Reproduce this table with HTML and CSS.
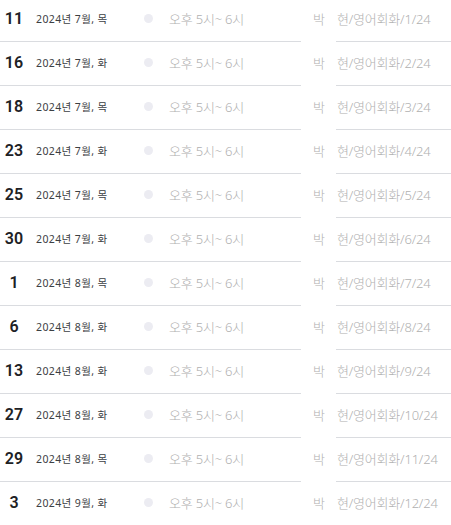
FILE: index.html
```html
<!DOCTYPE html>
<html lang="ko">
<head>
    <meta charset="UTF-8">
    <meta name="viewport" content="width=device-width, initial-scale=1.0">
    <title>수업 일정</title>
    <link rel="stylesheet" href="styles.css">
</head>
<body>
    <div class="schedule">
        <div class="row">
            <div class="line">
                <span class="day">11</span>
                <span class="date">2024년 7월, 목</span>
                <span class="dot"></span>
                <span class="time">오후 5시~ 6시</span>
                <span class="who">박</span>
                <span class="title">현/영어회화/1/24</span>
            </div>
            <div class="rule"><span class="seg-l"></span><span class="seg-r"></span></div>
        </div>
        <div class="row">
            <div class="line">
                <span class="day">16</span>
                <span class="date">2024년 7월, 화</span>
                <span class="dot"></span>
                <span class="time">오후 5시~ 6시</span>
                <span class="who">박</span>
                <span class="title">현/영어회화/2/24</span>
            </div>
            <div class="rule"><span class="seg-l"></span><span class="seg-r"></span></div>
        </div>
        <div class="row">
            <div class="line">
                <span class="day">18</span>
                <span class="date">2024년 7월, 목</span>
                <span class="dot"></span>
                <span class="time">오후 5시~ 6시</span>
                <span class="who">박</span>
                <span class="title">현/영어회화/3/24</span>
            </div>
            <div class="rule"><span class="seg-l"></span><span class="seg-r"></span></div>
        </div>
        <div class="row">
            <div class="line">
                <span class="day">23</span>
                <span class="date">2024년 7월, 화</span>
                <span class="dot"></span>
                <span class="time">오후 5시~ 6시</span>
                <span class="who">박</span>
                <span class="title">현/영어회화/4/24</span>
            </div>
            <div class="rule"><span class="seg-l"></span><span class="seg-r"></span></div>
        </div>
        <div class="row">
            <div class="line">
                <span class="day">25</span>
                <span class="date">2024년 7월, 목</span>
                <span class="dot"></span>
                <span class="time">오후 5시~ 6시</span>
                <span class="who">박</span>
                <span class="title">현/영어회화/5/24</span>
            </div>
            <div class="rule"><span class="seg-l"></span><span class="seg-r"></span></div>
        </div>
        <div class="row">
            <div class="line">
                <span class="day">30</span>
                <span class="date">2024년 7월, 화</span>
                <span class="dot"></span>
                <span class="time">오후 5시~ 6시</span>
                <span class="who">박</span>
                <span class="title">현/영어회화/6/24</span>
            </div>
            <div class="rule"><span class="seg-l"></span><span class="seg-r"></span></div>
        </div>
        <div class="row">
            <div class="line">
                <span class="day">1</span>
                <span class="date">2024년 8월, 목</span>
                <span class="dot"></span>
                <span class="time">오후 5시~ 6시</span>
                <span class="who">박</span>
                <span class="title">현/영어회화/7/24</span>
            </div>
            <div class="rule"><span class="seg-l"></span><span class="seg-r"></span></div>
        </div>
        <div class="row">
            <div class="line">
                <span class="day">6</span>
                <span class="date">2024년 8월, 화</span>
                <span class="dot"></span>
                <span class="time">오후 5시~ 6시</span>
                <span class="who">박</span>
                <span class="title">현/영어회화/8/24</span>
            </div>
            <div class="rule"><span class="seg-l"></span><span class="seg-r"></span></div>
        </div>
        <div class="row">
            <div class="line">
                <span class="day">13</span>
                <span class="date">2024년 8월, 화</span>
                <span class="dot"></span>
                <span class="time">오후 5시~ 6시</span>
                <span class="who">박</span>
                <span class="title">현/영어회화/9/24</span>
            </div>
            <div class="rule"><span class="seg-l"></span><span class="seg-r"></span></div>
        </div>
        <div class="row">
            <div class="line">
                <span class="day">27</span>
                <span class="date">2024년 8월, 화</span>
                <span class="dot"></span>
                <span class="time">오후 5시~ 6시</span>
                <span class="who">박</span>
                <span class="title">현/영어회화/10/24</span>
            </div>
            <div class="rule"><span class="seg-l"></span><span class="seg-r"></span></div>
        </div>
        <div class="row">
            <div class="line">
                <span class="day">29</span>
                <span class="date">2024년 8월, 목</span>
                <span class="dot"></span>
                <span class="time">오후 5시~ 6시</span>
                <span class="who">박</span>
                <span class="title">현/영어회화/11/24</span>
            </div>
            <div class="rule"><span class="seg-l"></span><span class="seg-r"></span></div>
        </div>
        <div class="row">
            <div class="line">
                <span class="day">3</span>
                <span class="date">2024년 9월, 화</span>
                <span class="dot"></span>
                <span class="time">오후 5시~ 6시</span>
                <span class="who">박</span>
                <span class="title">현/영어회화/12/24</span>
            </div>
            <div class="rule"><span class="seg-l"></span><span class="seg-r"></span></div>
        </div>
    </div>
</body>
</html>
```

FILE: styles.css
```css
body {
    margin: 0;
    background: #ffffff;
    font-family: "Noto Sans", "Noto Sans CJK KR", sans-serif;
    overflow: hidden;
}
.row {
    height: 44px;
    display: flex;
    flex-direction: column;
}
.line {
    flex: 1;
    display: flex;
    align-items: center;
    padding-bottom: 5px;
    white-space: nowrap;
}
.day {
    width: 28px;
    text-align: center;
    font-family: Roboto, "Noto Sans CJK KR", sans-serif;
    font-size: 16px;
    font-weight: 600;
    color: #202124;
}
.date {
    width: 108px;
    margin-left: 8px;
    font-size: 10.5px;
    font-weight: 400;
    color: #3c4043;
    letter-spacing: 0.4px;
}
.dot {
    width: 9px;
    height: 9px;
    border-radius: 50%;
    background: #ececf2;
    margin-right: 16px;
}
.time {
    width: 144px;
    font-size: 13px;
    font-weight: 300;
    color: #b0b0b0;
    letter-spacing: -0.2px;
}
.who {
    width: 24px;
    font-size: 13px;
    font-weight: 300;
    color: #b0b0b0;
}
.title {
    font-size: 13px;
    font-weight: 300;
    color: #b0b0b0;
    letter-spacing: -0.2px;
}
.rule {
    display: flex;
    height: 1px;
    margin-bottom: 2px;
}
.seg-l {
    width: 301px;
    background: #dadce0;
}
.seg-r {
    flex: 1;
    margin-left: 35px;
    background: #dadce0;
}
```
